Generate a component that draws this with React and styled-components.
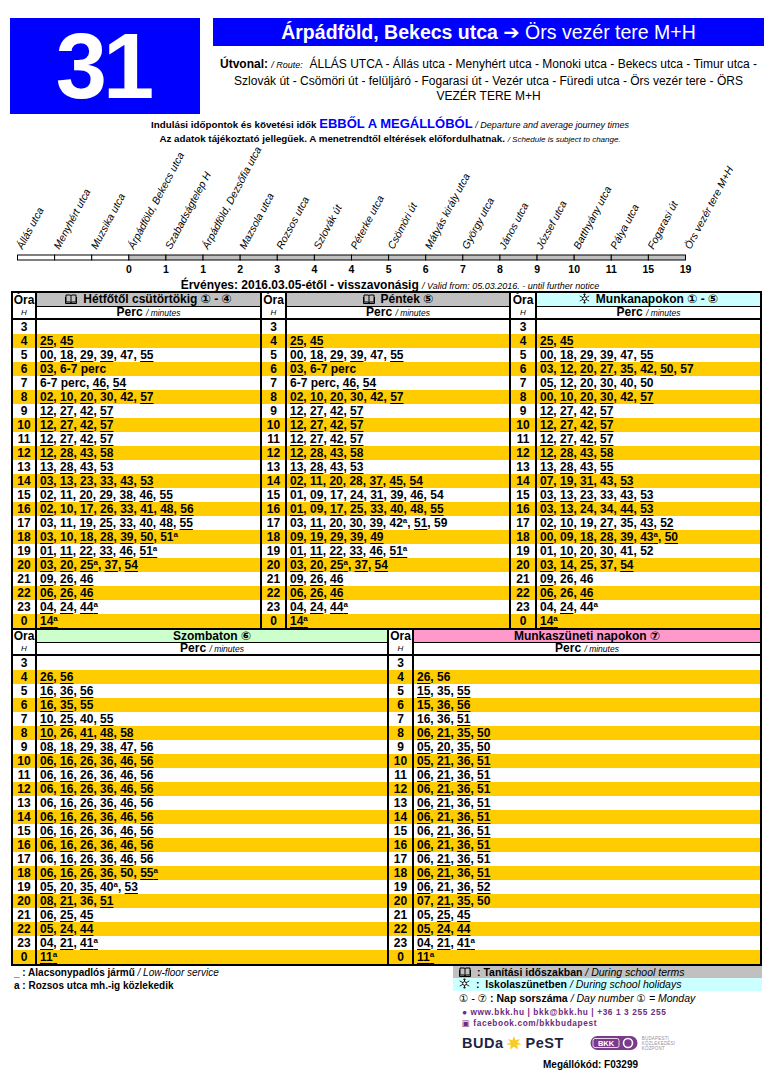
import React from "react";
import styled, { createGlobalStyle } from "styled-components";

const Global = createGlobalStyle`
  html, body { margin: 0; padding: 0; background: #fff; }
  body { font-family: "Liberation Sans", "DejaVu Sans", Arial, sans-serif; color: #000; }
`;

const FONT = `"Liberation Sans", "DejaVu Sans", Arial, sans-serif`;

const Page = styled.div`
  width: 780px;
  height: 1092px;
  box-sizing: border-box;
  padding-top: 18px;
  background: #fff;
  display: flex;
  flex-direction: column;
  overflow: hidden;
  font-family: ${FONT};
`;

const Header = styled.header`
  display: flex;
  gap: 13px;
  padding-left: 10px;
  height: 96px;
`;

const RouteBox = styled.div`
  width: 190px;
  height: 96px;
  background: #0000ff;
  color: #fff;
  display: flex;
  align-items: center;
  justify-content: center;
  font-weight: bold;
  font-size: 92px;
  line-height: 1;
  letter-spacing: -4px;
  padding-right: 4px;
  box-sizing: border-box;
`;

const HeadRight = styled.div`
  width: 551px;
  display: flex;
  flex-direction: column;
`;

const TitleBar = styled.div`
  height: 28px;
  background: #0000ff;
  color: #fff;
  display: flex;
  align-items: center;
  justify-content: center;
  font-size: 19.5px;
  white-space: pre;
`;

const RouteText = styled.div`
  margin-top: 11px;
  text-align: center;
  font-size: 12px;
  line-height: 15.5px;
  white-space: nowrap;
`;

const Italic = styled.span`
  font-style: italic;
  font-weight: normal;
  font-size: ${(p) => p.$size || 8.5}px;
`;

const Info = styled.div`
  margin-top: 3px;
  text-align: center;
  font-size: 9.8px;
  font-weight: bold;
  line-height: 14px;
  white-space: nowrap;
`;

const Blue = styled.span`
  color: #0000ff;
  font-size: 13px;
`;

const Diagram = styled.svg`
  display: block;
  width: 780px;
  height: 132px;
  overflow: visible;
`;

const Valid = styled.div`
  text-align: center;
  font-size: 12px;
  font-weight: bold;
  line-height: 12px;
  height: 12px;
`;

const Table = styled.table`
  margin-left: 11px;
  width: 751px;
  border: 2px solid #000;
  ${(p) => (p.$noTop ? "border-top: 0;" : "")}
  border-spacing: 0;
  table-layout: fixed;
  font-size: 12px;
  font-weight: bold;
`;

const Cell = styled.td`
  box-sizing: border-box;
  padding: 0;
  border-right: ${(p) => (p.$last ? 0 : 2)}px solid #000;
  white-space: nowrap;
  overflow: hidden;
`;

const OraCell = styled(Cell)`
  height: 13px;
  line-height: 13px;
  text-align: center;
  font-size: 12px;
`;

const DayHead = styled(Cell)`
  height: 13px;
  line-height: 12px;
  text-align: center;
  background: ${(p) => p.$bg};
  border-bottom: 1px solid #000;
`;

const HCell = styled(Cell)`
  height: 12px;
  line-height: 10px;
  text-align: center;
  font-style: italic;
  font-weight: normal;
  font-size: 8px;
  border-bottom: 2px solid #000;
  overflow: visible;
`;

const PercCell = styled(Cell)`
  height: 12px;
  line-height: 10px;
  text-align: center;
  border-bottom: 2px solid #000;
  overflow: visible;
`;

const HourCell = styled(Cell)`
  height: 14px;
  line-height: 14px;
  text-align: center;
  background: ${(p) => (p.$alt ? "#ffcc00" : "#fff")};
`;

const MinCell = styled(Cell)`
  height: 14px;
  line-height: 14px;
  padding-left: 3px;
  background: ${(p) => (p.$alt ? "#ffcc00" : "#fff")};
`;

const U = styled.span`
  text-decoration: underline;
  text-decoration-thickness: 1.6px;
  text-underline-offset: 2px;
`;

const Sup = styled.span`
  font-size: 8px;
  vertical-align: 4px;
  line-height: 0;
`;

const IconWrap = styled.span`
  display: inline-block;
  vertical-align: -1px;
  margin-right: 6px;
`;

const Footer = styled.footer`
  display: flex;
  padding-left: 14px;
`;

const Notes = styled.div`
  width: 439px;
  font-size: 10px;
  font-weight: bold;
  line-height: 13px;
`;

const Legend = styled.div`
  width: 309px;
  display: flex;
  flex-direction: column;
`;

const LegendRow = styled.div`
  height: ${(p) => p.$h || 12}px;
  line-height: ${(p) => p.$h || 12}px;
  background: ${(p) => p.$bg || "transparent"};
  padding-left: 6px;
  font-size: 10.5px;
  font-weight: bold;
  white-space: nowrap;
`;

const Contact = styled.div`
  margin-top: 2px;
  padding-left: 9px;
  color: #6d2a7f;
  font-size: 8.3px;
  font-weight: bold;
  line-height: 11px;
  letter-spacing: 0.6px;
`;

const Logos = styled.div`
  display: flex;
  align-items: center;
  gap: 26px;
  padding-left: 9px;
  margin-top: 5px;
  height: 18px;
`;

const BudaPest = styled.div`
  display: flex;
  align-items: center;
  color: #1d2544;
  font-weight: 900;
  font-size: 14.5px;
  letter-spacing: 0.5px;
`;

const BkkWrap = styled.div`
  display: flex;
  align-items: center;
  gap: 4px;
`;

const BkkSmall = styled.div`
  font-size: 4.5px;
  line-height: 5px;
  color: #9a8ea3;
  letter-spacing: 0.2px;
`;

const Code = styled.div`
  margin-top: 7px;
  padding-left: 90px;
  font-size: 10px;
  font-weight: bold;
`;

const BookIcon = () => (
  <IconWrap>
    <svg width="12" height="10" viewBox="0 0 12 10">
      <path
        d="M1 1h4c.6 0 1 .4 1 1v7M11 1H7c-.6 0-1 .4-1 1M1 1v7h4.2c.4 0 .8.4.8 1M11 1v7H6.8c-.4 0-.8.4-.8 1M0.5 3v6.5h11V3"
        fill="none"
        stroke="#000"
        strokeWidth="1"
      />
    </svg>
  </IconWrap>
);

const SnowIcon = () => (
  <IconWrap>
    <svg width="11" height="11" viewBox="0 0 12 12">
      <g stroke="#000" strokeWidth="0.9" fill="none">
        <path d="M6 0.5v11M0.8 3.2l10.4 5.6M0.8 8.8l10.4-5.6" />
        <circle cx="6" cy="6" r="2" fill="#fff" />
        <path d="M4.6 1.2L6 2.4 7.4 1.2M4.6 10.8L6 9.6 7.4 10.8" />
      </g>
    </svg>
  </IconWrap>
);

const HOURS = [3, 4, 5, 6, 7, 8, 9, 10, 11, 12, 13, 14, 15, 16, 17, 18, 19, 20, 21, 22, 23, 0];

const MON = [
  "", "_25,_45", "_00,_18,_29,_39,47,_55", "_03,6-7 perc", "6-7 perc,_46,_54",
  "_02,_10,_20,30,42,_57", "_12,_27,_42,_57", "_12,_27,_42,_57", "_12,_27,_42,_57",
  "_12,_28,_43,_58", "_13,_28,_43,_53", "_03,_13,_23,_33,_43,_53",
  "_02,11,_20,_29,_38,_46,_55", "_02,10,_17,_26,_33,_41,_48,_56",
  "03,11,_19,_25,_33,_40,_48,_55", "_03,10,_18,_28,_39,_50,51a",
  "_01,_11,_22,_33,_46,_51a", "_03,_20,_25a,_37,_54", "_09,_26,_46", "_06,_26,_46",
  "_04,_24,_44a", "_14a",
];

const FRI = [
  "", "_25,_45", "_00,_18,_29,_39,47,_55", "_03,6-7 perc", "6-7 perc,_46,_54",
  "_02,_10,_20,30,42,_57", "_12,_27,_42,_57", "_12,_27,_42,_57", "_12,_27,_42,_57",
  "_12,_28,_43,_58", "_13,_28,_43,_53", "_02,11,_20,28,_37,_45,_54",
  "01,_09,17,_24,_31,_39,_46,54", "_01,09,_17,_25,_33,_40,48,_55",
  "03,_11,_20,_30,_39,42a,_51,59", "_09,_19,_29,_39,_49",
  "_01,_11,_22,_33,_46,_51a", "_03,_20,_25a,_37,_54", "_09,_26,_46", "_06,_26,_46",
  "_04,_24,_44a", "_14a",
];

const HOL = [
  "", "_25,_45", "_00,_18,_29,_39,47,_55", "03,_12,_20,_27,_35,42,_50,57",
  "_05,_12,_20,_30,40,50", "_00,_10,_20,_30,42,_57", "_12,_27,_42,_57",
  "_12,_27,_42,_57", "_12,_27,_42,_57", "_12,_28,_43,_58", "_13,_28,_43,_55",
  "_07,_19,_31,43,_53", "_03,_13,_23,33,_43,_53", "_03,_13,24,34,_44,_53",
  "_02,_10,19,_27,35,_43,_52", "_00,09,_18,_28,_39,_43a,_50", "01,_10,_20,_30,41,52",
  "_03,_14,25,37,_54", "_09,26,46", "_06,26,_46", "04,_24,44a", "_14a",
];

const SAT = [
  "", "_26,_56", "_16,_36,_56", "_16,_35,55", "_10,_25,40,_55", "_10,26,_41,_48,_58",
  "_08,_18,_29,_38,_47,_56", "_06,_16,_26,_36,_46,_56", "_06,_16,_26,_36,_46,_56",
  "06,_16,_26,_36,_46,_56", "06,_16,_26,_36,_46,56", "_06,_16,_26,_36,46,_56",
  "_06,_16,_26,36,_46,_56", "_06,_16,_26,_36,_46,_56", "06,_16,_26,_36,_46,56",
  "_06,_16,_26,_36,50,_55a", "_05,_20,_35,40a,_53", "_08,_21,36,_51", "_06,_25,_45",
  "_05,_24,_44", "_04,_21,_41a", "_11a",
];

const SUN = [
  "", "_26,56", "_15,35,_55", "15,_36,_56", "16,36,_51", "_06,_21,_35,_50",
  "_05,_20,_35,_50", "_05,_21,_36,_51", "_06,_21,_36,_51", "06,_21,_36,51",
  "_06,_21,36,_51", "_06,21,_36,_51", "06,_21,_36,_51", "_06,21,_36,_51",
  "06,_21,_36,51", "_06,_21,36,_51", "_06,21,_36,_52", "07,_21,_35,50", "05,_25,_45",
  "_05,_24,_44", "_04,_21,_41a", "_11a",
];

const TOP = [
  { title: "Hétfőtől csütörtökig ① - ④", bg: "#c0c0c0", icon: "book", data: MON, w: [24, 225] },
  { title: "Péntek ⑤", bg: "#c0c0c0", icon: "book", data: FRI, w: [25, 224] },
  { title: "Munkanapokon ① - ⑤", bg: "#ccffff", icon: "snow", data: HOL, w: [26, 223] },
];

const BOTTOM = [
  { title: "Szombaton ⑥", bg: "#ccffcc", data: SAT, w: [24, 352] },
  { title: "Munkaszüneti napokon ⑦", bg: "#ff99cc", data: SUN, w: [25, 346] },
];

function Minutes({ s }) {
  if (!s) return null;
  const items = s.split(",");
  return items.map((raw, i) => {
    const under = raw.startsWith("_");
    let t = under ? raw.slice(1) : raw;
    const sup = /\da$/.test(t);
    if (sup) t = t.slice(0, -1);
    const body = (
      <>
        {t}
        {sup && <Sup>a</Sup>}
      </>
    );
    return (
      <React.Fragment key={i}>
        {under ? <U>{body}</U> : body}
        {i < items.length - 1 ? ", " : ""}
      </React.Fragment>
    );
  });
}

function Timetable({ sections, noTop }) {
  const n = sections.length;
  return (
    <Table $noTop={noTop}>
      <colgroup>
        {sections.map((s, i) => (
          <React.Fragment key={i}>
            <col style={{ width: s.w[0] }} />
            <col style={{ width: s.w[1] }} />
          </React.Fragment>
        ))}
      </colgroup>
      <tbody>
        <tr>
          {sections.map((s, i) => (
            <React.Fragment key={i}>
              <OraCell>Óra</OraCell>
              <DayHead $bg={s.bg} $last={i === n - 1}>
                {s.icon === "book" && <BookIcon />}
                {s.icon === "snow" && <SnowIcon />}
                {s.title}
              </DayHead>
            </React.Fragment>
          ))}
        </tr>
        <tr>
          {sections.map((s, i) => (
            <React.Fragment key={i}>
              <HCell>H</HCell>
              <PercCell $last={i === n - 1}>
                Perc <Italic $size={8.5}>/ minutes</Italic>
              </PercCell>
            </React.Fragment>
          ))}
        </tr>
        {HOURS.map((h, r) => (
          <tr key={h}>
            {sections.map((s, i) => (
              <React.Fragment key={i}>
                <HourCell $alt={r % 2 === 1}>{h}</HourCell>
                <MinCell $alt={r % 2 === 1} $last={i === n - 1}>
                  <Minutes s={s.data[r]} />
                </MinCell>
              </React.Fragment>
            ))}
          </tr>
        ))}
      </tbody>
    </Table>
  );
}

const STOPS = [
  "Állás utca", "Menyhért utca", "Muzsika utca", "Árpádföld, Bekecs utca",
  "Szabadságtelep H", "Árpádföld, Dezsőfia utca", "Mazsola utca", "Rozsos utca",
  "Szlovák út", "Péterke utca", "Csömöri út", "Mátyás király utca", "György utca",
  "János utca", "József utca", "Batthyány utca", "Pálya utca", "Fogarasi út",
  "Örs vezér tere M+H",
];
const TIMES = [null, null, null, 0, 1, 1, 2, 3, 4, 4, 5, 6, 7, 8, 9, 10, 11, 15, 19];

function StopDiagram() {
  const x0 = 17.5;
  const step = (685.5 - 17.5) / 18;
  return (
    <Diagram viewBox="0 0 780 132">
      {STOPS.map((name, i) => (
        <text
          key={name}
          transform={`translate(${x0 + i * step + 5} 103) rotate(-62)`}
          fontFamily={FONT}
          fontSize="10.5"
          fontStyle="italic"
          fill="#000"
        >
          {name}
        </text>
      ))}
      {STOPS.slice(0, 18).map((_, i) => (
        <rect
          key={i}
          x={x0 + i * step}
          y={108}
          width={step}
          height={5}
          fill={i < 3 ? "#fff" : "#c0c0c0"}
          stroke="#000"
          strokeWidth="1"
        />
      ))}
      {TIMES.map((t, i) =>
        t === null ? null : (
          <text
            key={i}
            x={x0 + i * step}
            y={126}
            textAnchor="middle"
            fontFamily={FONT}
            fontSize="10.5"
            fontWeight="bold"
          >
            {t}
          </text>
        )
      )}
    </Diagram>
  );
}

function BudapestLogo() {
  return (
    <BudaPest>
      BUDa
      <svg width="18" height="16" viewBox="0 0 18 16" style={{ margin: "0 2px" }}>
        <g fill="#f5c400">
          <path d="M9 1l1.6 4.2L15 4l-2.6 3.6L17 9.5l-4.8.3L13 14.5 9 11.8 5 14.5l.8-4.7L1 9.5l4.6-1.9L3 4l4.4 1.2z" opacity="0.85" />
        </g>
      </svg>
      PeST
    </BudaPest>
  );
}

function BkkLogo() {
  return (
    <BkkWrap>
      <svg width="48" height="18" viewBox="0 0 48 18">
        <rect x="0.5" y="2" width="47" height="14" rx="7" fill="#7b3a8c" />
        <rect x="3" y="4.5" width="26" height="9" rx="2" fill="none" stroke="#fff" strokeWidth="0.8" />
        <text x="16" y="12.2" textAnchor="middle" fontFamily={FONT} fontSize="7.5" fontWeight="bold" fill="#fff">
          BKK
        </text>
        <circle cx="38" cy="9" r="4.5" fill="none" stroke="#fff" strokeWidth="1.6" />
      </svg>
      <BkkSmall>
        BUDAPESTI
        <br />
        KÖZLEKEDÉSI
        <br />
        KÖZPONT
      </BkkSmall>
    </BkkWrap>
  );
}

export default function App() {
  return (
    <Page>
      <Global />
      <Header>
        <RouteBox>31</RouteBox>
        <HeadRight>
          <TitleBar>
            <b>Árpádföld, Bekecs utca</b> ➔ Örs vezér tere M+H
          </TitleBar>
          <RouteText>
            <b>Útvonal:</b> <Italic $size={9}>/ Route:</Italic>&nbsp; ÁLLÁS UTCA - Állás utca - Menyhért
            utca - Monoki utca - Bekecs utca - Timur utca -
            <br />
            Szlovák út - Csömöri út - felüljáró - Fogarasi út - Vezér utca - Füredi utca - Örs vezér
            tere - ÖRS
            <br />
            VEZÉR TERE M+H
          </RouteText>
        </HeadRight>
      </Header>
      <Info>
        <div>
          Indulási időpontok és követési idők <Blue>EBBŐL A MEGÁLLÓBÓL</Blue>{" "}
          <Italic $size={9}>/ Departure and average journey times</Italic>
        </div>
        <div>
          Az adatok tájékoztató jellegűek. A menetrendtől eltérések előfordulhatnak.{" "}
          <Italic $size={8}>/ Schedule is subject to change.</Italic>
        </div>
      </Info>
      <StopDiagram />
      <Valid>
        Érvényes: 2016.03.05-étől - visszavonásig{" "}
        <Italic $size={9}>/ Valid from: 05.03.2016. - until further notice</Italic>
      </Valid>
      <Timetable sections={TOP} />
      <Timetable sections={BOTTOM} noTop />
      <Footer>
        <Notes>
          <div>
            _ : Alacsonypadlós jármű <Italic $size={10}>/ Low-floor service</Italic>
          </div>
          <div>a : Rozsos utca mh.-ig közlekedik</div>
        </Notes>
        <Legend>
          <LegendRow $bg="#c0c0c0">
            <BookIcon />: Tanítási időszakban <Italic $size={10.5}>/ During school terms</Italic>
          </LegendRow>
          <LegendRow $bg="#ccffff" $h={13}>
            <SnowIcon />: &nbsp;Iskolaszünetben <Italic $size={10.5}>/ During school holidays</Italic>
          </LegendRow>
          <LegendRow $h={14}>
            <Italic $size={10.5}>① - ⑦</Italic> : Nap sorszáma{" "}
            <Italic $size={10.5}>/ Day number ① = Monday</Italic>
          </LegendRow>
          <Contact>
            <div>● www.bkk.hu | bkk@bkk.hu | +36 1 3 255 255</div>
            <div>▣ facebook.com/bkkbudapest</div>
          </Contact>
          <Logos>
            <BudapestLogo />
            <BkkLogo />
          </Logos>
          <Code>Megállókód: F03299</Code>
        </Legend>
      </Footer>
    </Page>
  );
}
